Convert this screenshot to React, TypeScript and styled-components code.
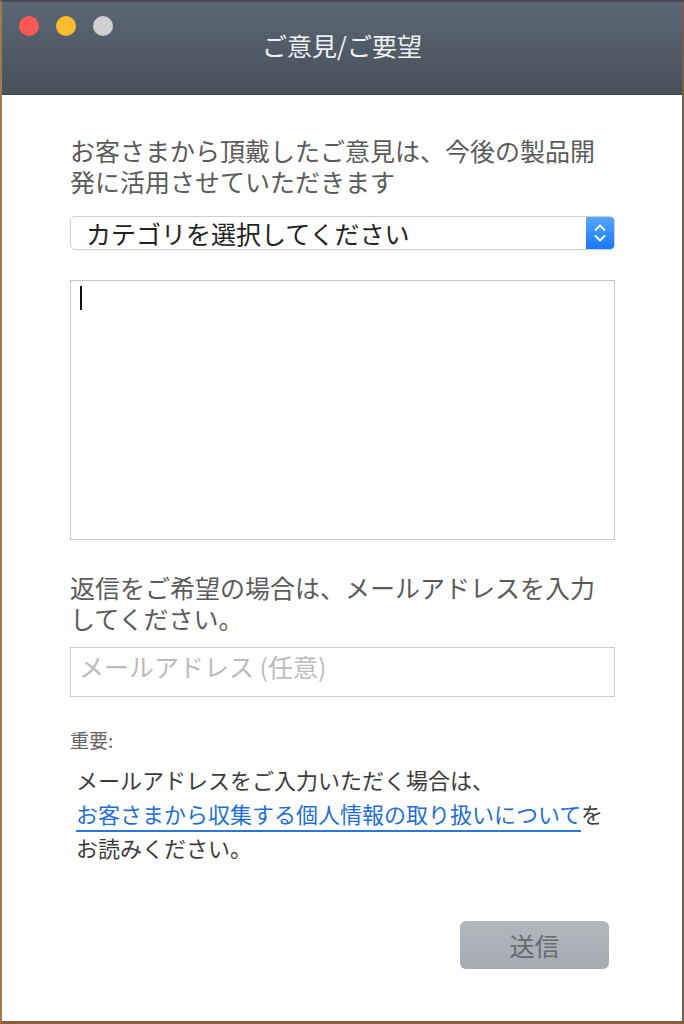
import styled, { createGlobalStyle } from 'styled-components';

const GlobalStyle = createGlobalStyle`
  html, body {
    margin:0;
    padding:0;
    background:#6b5040;
  }
  *{ box-sizing:border-box; }
`

const FONT = `"Noto Sans CJK JP", "Noto Sans", sans-serif`;

const Window = styled.div`
  width:684px;
  height:1024px;
  display:flex;
  flex-direction:column;
  border-style:solid;
  border-width:2px 2px 3px 2px;
  border-color:#4a4756 #7d5a44 #8e5a3d #a07a4a;
  background-color:#fff;
  font-family:${FONT};
`

const TitleBar = styled.div`
  height:93px;
  flex-shrink:0;
  display:grid;
  grid-template-columns:1fr auto 1fr;
  align-items:start;
  padding:0 17px;
  background:linear-gradient(#5b6776, #48505a);
  border-bottom:1px solid #3e444b;
`

const Lights = styled.div`
  display:flex;
  gap:17px;
  margin-top:14px;
`

const Light = styled.span<{ $color: string }>`
  width:20px;
  height:20px;
  border-radius:50%;
  background-color:${p => p.$color};
`

const Title = styled.div`
  margin-top:28px;
  font-size:25px;
  line-height:30px;
  color:#eef0f2;
`

const Body = styled.div`
  flex:1;
  display:flex;
  flex-direction:column;
  padding:40px 67px 52px 68px;
`

const Lead = styled.p`
  margin:0;
  font-size:25px;
  line-height:31px;
  color:#5b5b5b;
`

const SelectBox = styled.div`
  margin-top:19px;
  height:34px;
  display:flex;
  align-items:center;
  border:1px solid #d0d0d0;
  border-radius:5px;
  box-shadow:0 1px 1px rgba(0,0,0,0.06);
  overflow:hidden;
`

const SelectLabel = styled.span`
  flex:1;
  padding-left:15px;
  font-size:25px;
  line-height:32px;
  color:#222;
`

const Stepper = styled.span`
  width:28px;
  height:100%;
  display:flex;
  align-items:center;
  justify-content:center;
  background:linear-gradient(#55a6ff, #1877f6);
`

const EditorWrap = styled.div`
  position:relative;
  margin-top:30px;
`

const Editor = styled.textarea`
  display:block;
  width:100%;
  height:260px;
  resize:none;
  border:1px solid #c6c6c6;
  outline:none;
  padding:6px 9px;
  font-family:${FONT};
  font-size:22px;
`

const Caret = styled.span`
  position:absolute;
  left:10px;
  top:6px;
  width:2px;
  height:24px;
  background-color:#111;
`

const Label = styled(Lead)`
  margin-top:32px;
`

const EmailInput = styled.input`
  margin-top:13px;
  width:100%;
  height:50px;
  padding:0 8px 12px;
  border:1px solid #cbcbcb;
  outline:none;
  font-family:${FONT};
  font-size:25px;
  color:#333;
  &::placeholder{
    color:#bcbcbc;
  }
`

const Important = styled.div`
  margin-top:31px;
  font-size:19px;
  line-height:24px;
  color:#666;
`

const Notice = styled.p`
  margin:10px 0 0;
  padding:0 6px;
  font-size:22px;
  line-height:34px;
  color:#3c3c3c;
`

const Link = styled.a`
  color:#1f6fd6;
  text-decoration:none;
  border-bottom:2px solid #2a78dc;
  padding-bottom:1px;
`

const Footer = styled.div`
  margin-top:auto;
  display:flex;
  justify-content:flex-end;
  padding-right:6px;
`

const SendButton = styled.button`
  width:149px;
  height:48px;
  border:none;
  border-radius:6px;
  background:linear-gradient(#b2b7bc, #a5abb1);
  font-family:${FONT};
  font-size:25px;
  color:#676b70;
`

export default function App() {
  return (
    <>
      <GlobalStyle />
      <Window>
        <TitleBar>
          <Lights>
            <Light $color="#fc5753" />
            <Light $color="#fdbc2e" />
            <Light $color="#d0d0d0" />
          </Lights>
          <Title>ご意見/ご要望</Title>
          <div />
        </TitleBar>
        <Body>
          <Lead>お客さまから頂戴したご意見は、今後の製品開発に活用させていただきます</Lead>
          <SelectBox>
            <SelectLabel>カテゴリを選択してください</SelectLabel>
            <Stepper>
              <svg width="14" height="24" viewBox="0 0 14 24" fill="none" stroke="#fff" strokeWidth="1.8" strokeLinecap="round" strokeLinejoin="round">
                <path d="M2.5 9 7 4.5 11.5 9" />
                <path d="M2.5 15 7 19.5 11.5 15" />
              </svg>
            </Stepper>
          </SelectBox>
          <EditorWrap>
            <Editor />
            <Caret />
          </EditorWrap>
          <Label>返信をご希望の場合は、メールアドレスを入力してください。</Label>
          <EmailInput placeholder="メールアドレス (任意)" />
          <Important>重要:</Important>
          <Notice>
            メールアドレスをご入力いただく場合は、<br />
            <Link>お客さまから収集する個人情報の取り扱いについて</Link>を<br />
            お読みください。
          </Notice>
          <Footer>
            <SendButton>送信</SendButton>
          </Footer>
        </Body>
      </Window>
    </>
  );
}
